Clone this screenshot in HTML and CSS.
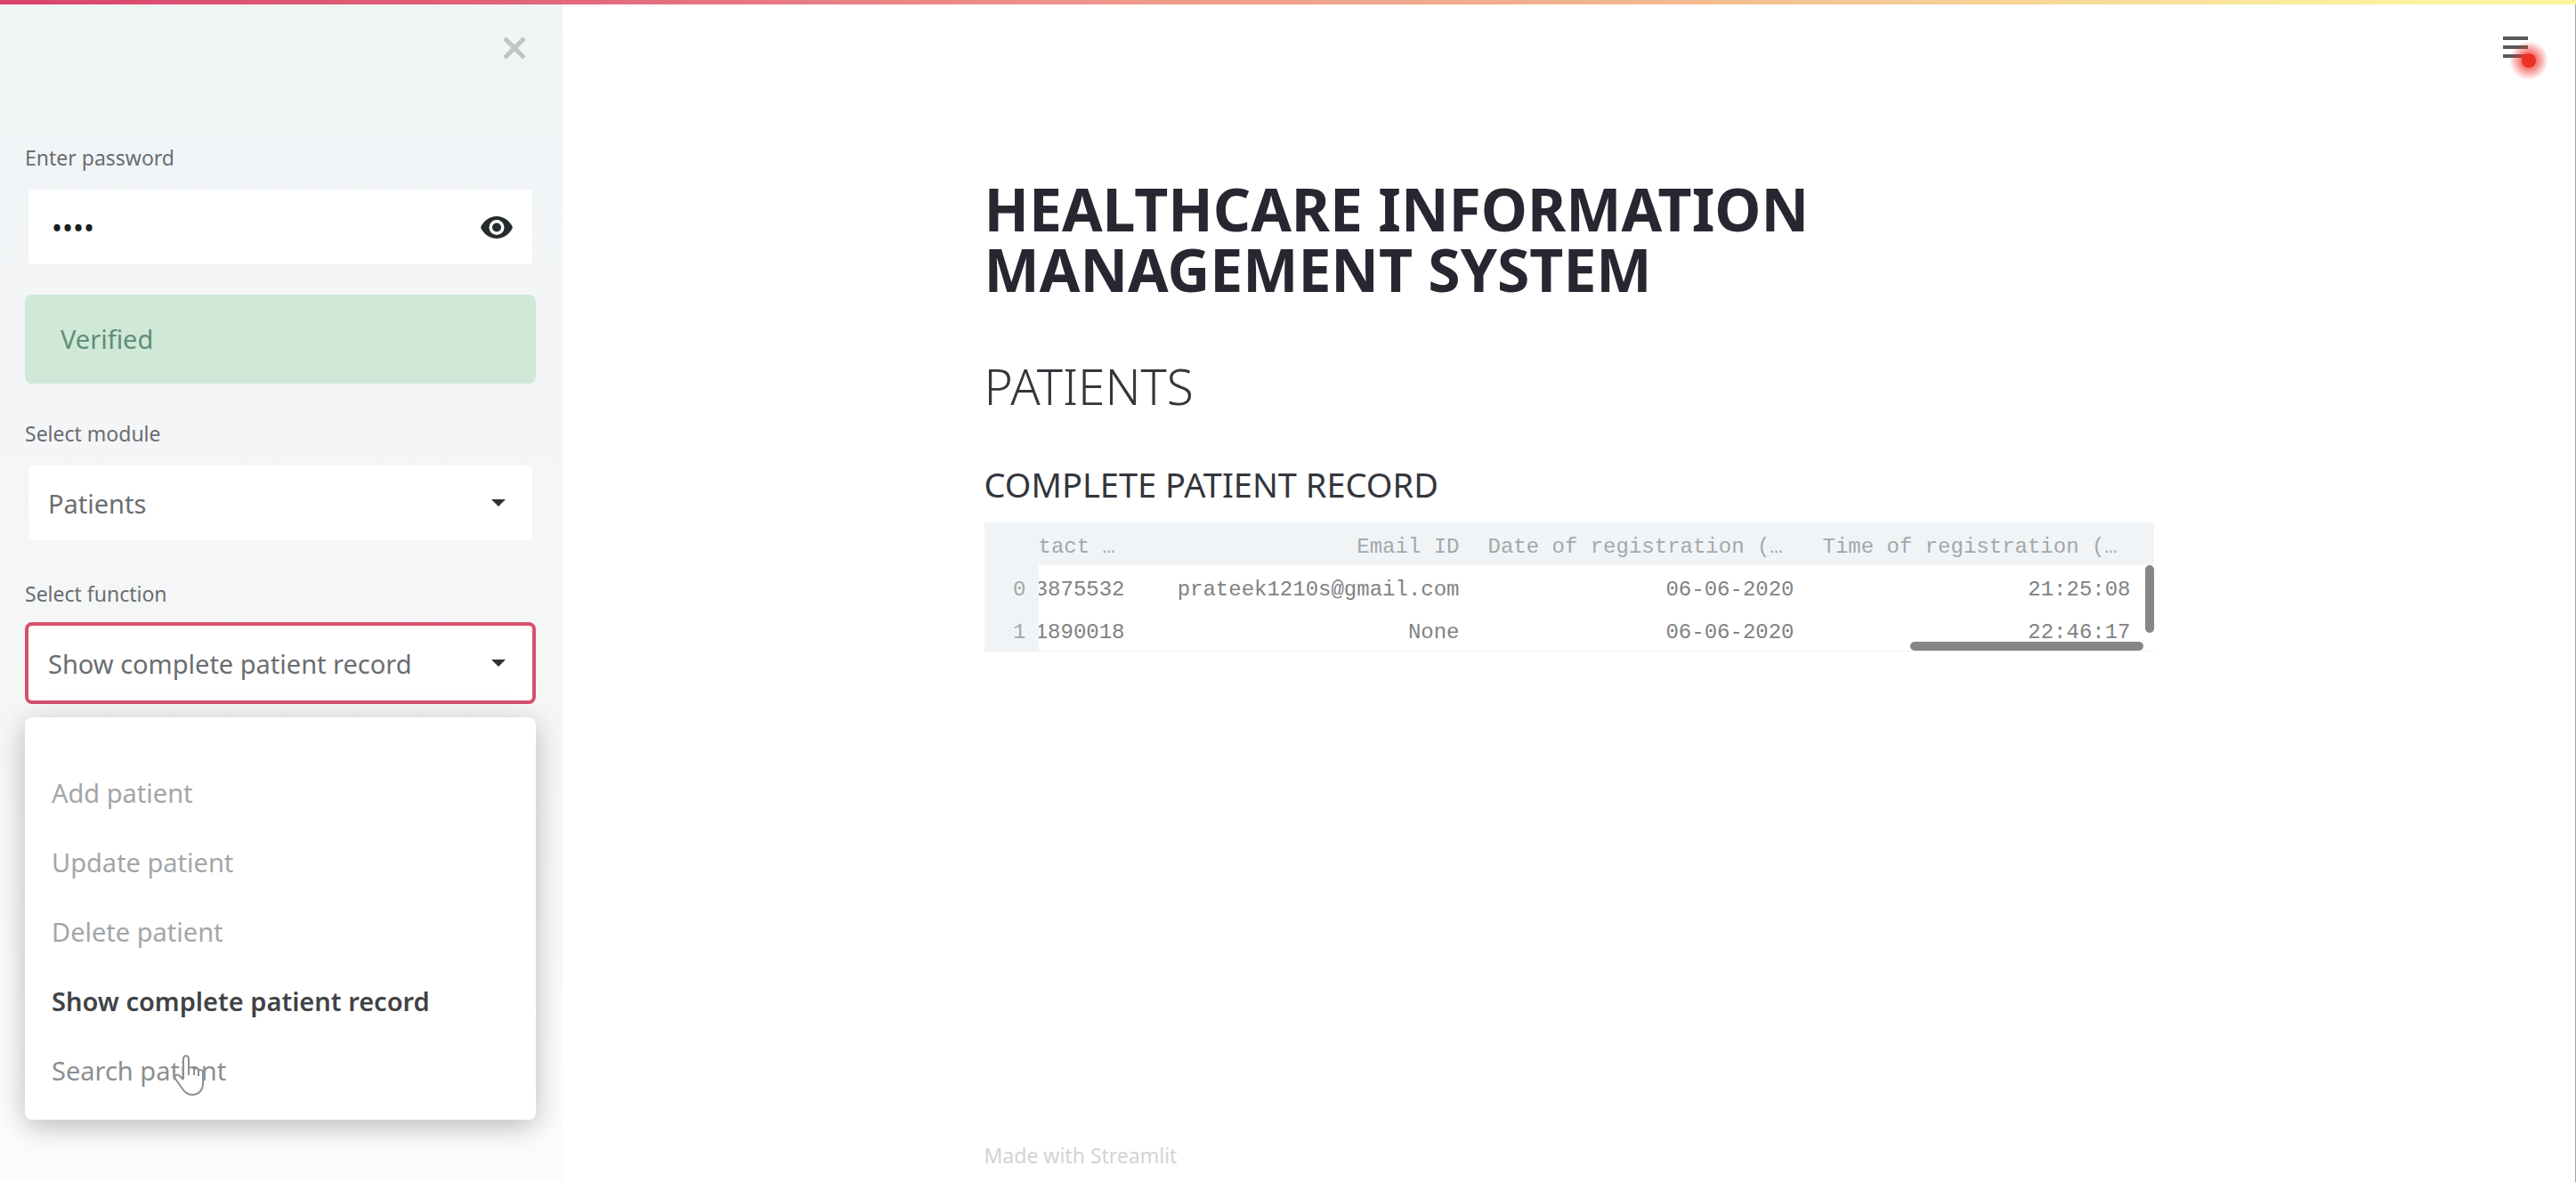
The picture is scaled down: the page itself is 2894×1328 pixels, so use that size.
FILE: index.html
```html
<!DOCTYPE html>
<html lang="en">
<head>
<meta charset="utf-8">
<title>Healthcare Information Management System</title>
<link rel="stylesheet" href="styles.css">
</head>
<body>
<div class="topbar"></div>
<div class="app">
  <aside class="sidebar">
    <button class="close" type="button" aria-label="Close sidebar">
      <svg width="28" height="28" viewBox="0 0 28 28"><path d="M3 3 25 25M25 3 3 25" stroke="#c1c5c5" stroke-width="5" fill="none"/></svg>
    </button>

    <div class="field">
      <label for="password">Enter password</label>
      <div class="control">
        <input id="password" class="password" type="password" value="1234">
        <button class="reveal" type="button" aria-label="Show password">
          <svg width="36" height="25" viewBox="0 0 36 25"><path fill-rule="evenodd" fill="#262b2d" d="M18 0C10 0 3.200 5 0 12.500 3.200 20 10 25 18 25s14.800-5 18-12.500C32.800 5 26 0 18 0Zm0 21a8.500 8.500 0 1 1 0-17 8.500 8.500 0 0 1 0 17Zm0-13.500a5 5 0 1 0 0 10 5 5 0 0 0 0-10Z"/></svg>
        </button>
      </div>
    </div>

    <div class="alert" role="alert">Verified</div>

    <div class="field">
      <label for="module">Select module</label>
      <div class="control">
        <select id="module"><option>Patients</option></select>
        <svg class="caret" width="16" height="8" viewBox="0 0 16 8"><path d="M0 0H16L8 8Z" fill="#303336"/></svg>
      </div>
    </div>

    <div class="field">
      <label for="function">Select function</label>
      <div class="control focused">
        <select id="function"><option>Show complete patient record</option></select>
        <svg class="caret" width="16" height="8" viewBox="0 0 16 8"><path d="M0 0H16L8 8Z" fill="#303336"/></svg>
      </div>
      <ul class="menu" role="listbox" aria-label="Select function">
        <li role="option">Add patient</li>
        <li role="option">Update patient</li>
        <li role="option">Delete patient</li>
        <li role="option" class="selected" aria-selected="true">Show complete patient record</li>
        <li role="option" class="hovered">Search patient</li>
      </ul>
      <svg class="cursor" width="34" height="46" viewBox="0 0 34 46"><path d="M11 27V5c0-5 6-5 6 0v11c1-3 6-2 6 1 1-3 5-2 5 1 1-2 5-1 5 2v12c0 8-5 13-12 13-6 0-9-3-12-8L2 27c-2-4 2-6 5-3l4 4M17 16v7M23 17v6M28 18v6" fill="#fff" stroke="#8d8f91" stroke-width="2" stroke-linejoin="round"/></svg>
    </div>
  </aside>

  <main class="main">
    <button class="hamburger" type="button" aria-label="Menu">
      <svg width="60" height="60" viewBox="0 0 60 60">
        <defs><radialGradient id="glow"><stop offset=".3" stop-color="#f03028" stop-opacity=".75"/><stop offset="1" stop-color="#f03028" stop-opacity="0"/></radialGradient></defs>
        <path d="M8 11H36M8 21H36M8 31H36" stroke="#55595c" stroke-width="4"/>
        <circle cx="37" cy="36" r="22" fill="url(#glow)"/>
        <circle cx="37" cy="36" r="8" fill="#ee3026"/>
      </svg>
    </button>
    <div class="content">
      <h1>HEALTHCARE INFORMATION<br>MANAGEMENT SYSTEM</h1>
      <h2>PATIENTS</h2>
      <h3>COMPLETE PATIENT RECORD</h3>
      <div class="frame">
        <table>
          <colgroup><col class="col-index"><col class="col-contact"><col><col><col class="col-time"></colgroup>
          <thead>
            <tr><th></th><th class="left flush">tact …</th><th>Email ID</th><th class="left">Date of registration (…</th><th class="left">Time of registration (…</th></tr>
          </thead>
          <tbody>
            <tr><th>0</th><td class="flush"><span class="clip">3875532</span></td><td>prateek1210s@gmail.com</td><td>06-06-2020</td><td>21:25:08</td></tr>
            <tr><th>1</th><td class="flush"><span class="clip">1890018</span></td><td>None</td><td>06-06-2020</td><td>22:46:17</td></tr>
          </tbody>
        </table>
        <div class="bar-y"></div>
        <div class="bar-x"></div>
      </div>
      <footer>Made with <a href="#">Streamlit</a></footer>
    </div>
  </main>
</div>
</body>
</html>
```
FILE: styles.css
```css
* { box-sizing: border-box; }

body {
  margin: 0;
  font-family: "Noto Sans", "Open Sans", sans-serif;
  font-size: 29px;
  color: #262730;
  background: #fff;
}

button { border: 0; padding: 0; background: none; }
svg { display: block; }

.topbar {
  position: absolute;
  z-index: 2;
  top: 0;
  left: 0;
  right: 0;
  height: 5px;
  background: linear-gradient(to right, #d94468, #e2637c 20%, #ee958a 42%, #f1b48f 62%, #fcf3a0 94%, #fdf59e);
}

.app {
  display: flex;
  min-height: 100vh;
  border-right: 1px solid #a5a5a5;
}

/* Sidebar */
.sidebar {
  flex: none;
  width: 632px;
  padding: 40px 30px 0 28px;
  background: linear-gradient(#eff5f4, #f2f5f7 15%, #f4f5f7 35%, #f5f7f7 60%, #fcfcfc 97%);
}

.close { display: block; margin: 0 10px 93px auto; }

.field {
  position: relative;
  display: flex;
  flex-direction: column;
  gap: 16px;
}

.field + .field, .alert + .field { margin-top: 40px; }

label {
  font-size: 23px;
  line-height: 32px;
  color: #6a6d71;
}

.control {
  display: flex;
  align-items: center;
  height: 92px;
  padding-right: 30px;
  border: 4px solid transparent;
  border-radius: 8px;
  background: #fff;
  background-clip: padding-box;
}

.control.focused { border-color: #d9506f; }

.control input, .control select {
  flex: 1;
  min-width: 0;
  height: 84px;
  border: 0;
  outline: 0;
  padding: 0 22px;
  appearance: none;
  background: transparent;
  font: inherit;
  color: #6a6d71;
}

.control .password {
  padding-left: 26px;
  font-size: 32px;
  color: #1c1f21;
}

.reveal { margin-right: -8px; }

.alert {
  margin-top: 30px;
  padding: 0 40px;
  border-radius: 8px;
  line-height: 100px;
  color: #5f8f76;
  background: #cfe8d7;
}

.menu {
  position: absolute;
  z-index: 1;
  top: calc(100% + 15px);
  left: 0;
  right: 0;
  margin: 0;
  padding: 46px 30px 16px;
  list-style: none;
  line-height: 78px;
  color: #a3a6a9;
  background: #fff;
  border-radius: 8px;
  box-shadow: 0 8px 32px rgba(0, 0, 0, .26);
}

.menu .selected { font-weight: 600; color: #404347; }
.menu .hovered { color: #8c8f92; }

.cursor {
  position: absolute;
  z-index: 2;
  left: 167px;
  top: 534px;
}

/* Main area */
.main {
  position: relative;
  flex: 1;
  display: flex;
  justify-content: center;
}

.hamburger {
  position: absolute;
  top: 32px;
  right: 29px;
}

.content {
  display: flex;
  flex-direction: column;
  width: 100%;
  max-width: 1314px;
  padding: 200px 0 14px;
}

h1, h2, h3 { margin: 0; }
h1 { font-size: 66px; line-height: 68px; font-weight: 700; }
h2 { margin-top: 60px; font-size: 55px; line-height: 76px; font-weight: 300; color: #34363c; }
h3 { margin-top: 46px; font-size: 38px; line-height: 52px; font-weight: 400; color: #34363c; }

.frame {
  position: relative;
  margin-top: 17px;
  border-bottom: 1px solid #f0f1f2;
}

table {
  width: 100%;
  table-layout: fixed;
  border-collapse: collapse;
  font: 24px "Liberation Mono", monospace;
}

.col-index { width: 61px; }
.col-contact { width: 113px; }
.col-time { width: 388px; }

th, td {
  height: 48px;
  padding: 8px 16px 0;
  line-height: 40px;
  text-align: right;
  font-weight: 400;
  white-space: nowrap;
  color: #808284;
}

th { color: #a4a8ab; background: #f1f4f6; }
tr > :last-child { padding-right: 26px; }
tbody th { padding-right: 14px; }
.left { text-align: left; }
tr > .flush { padding-left: 0; }

.clip {
  display: flex;
  justify-content: flex-end;
  overflow: hidden;
}

.bar-y, .bar-x {
  position: absolute;
  border-radius: 5px;
  background: #868686;
}

.bar-y { top: 48px; right: 0; width: 10px; height: 76px; }
.bar-x { bottom: 0; right: 12px; width: 262px; height: 10px; }

footer {
  margin-top: auto;
  font-size: 23px;
  line-height: 32px;
  color: #d2d3d7;
}

footer a { color: inherit; text-decoration: none; }
```
